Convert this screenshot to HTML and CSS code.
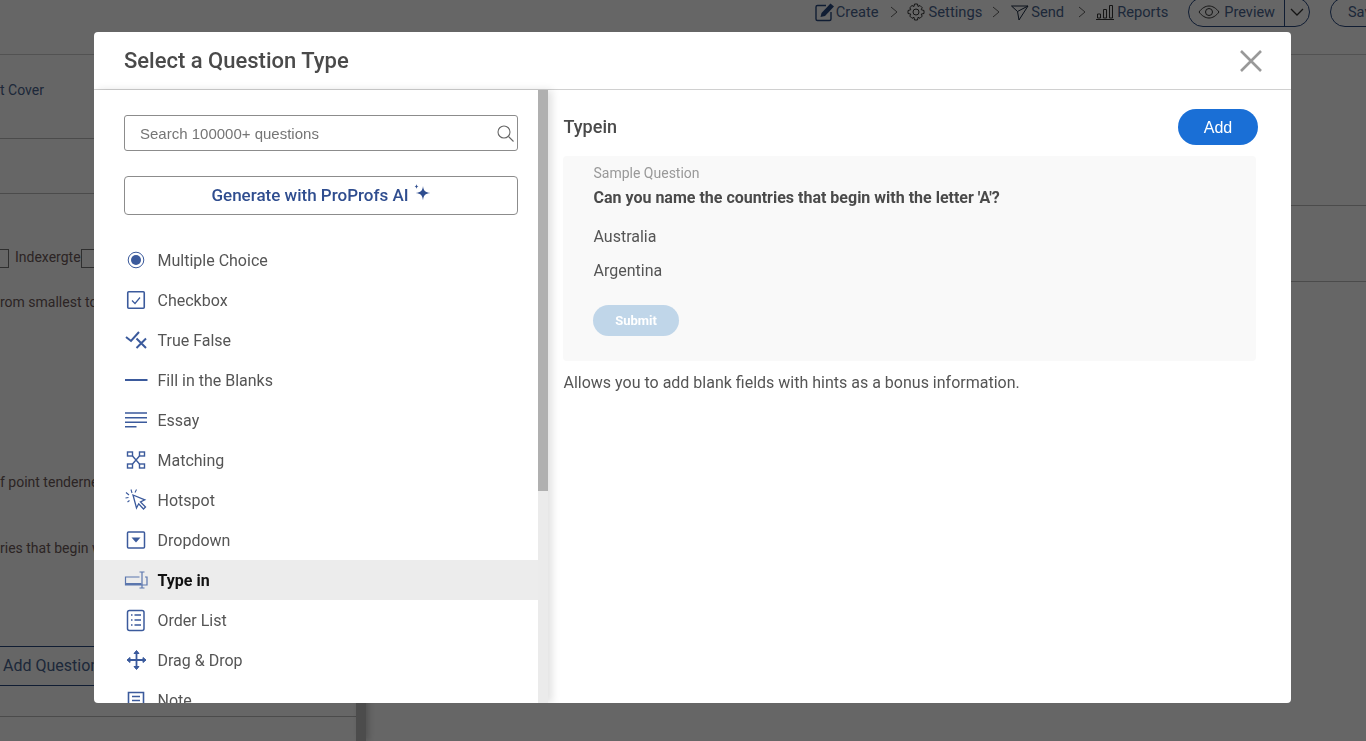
FILE: index.html
```html
<!DOCTYPE html>
<html lang="en">
<head>
  <meta charset="UTF-8" />
  <title>Select a Question Type</title>
  <link rel="stylesheet" href="styles.css">
</head>
<body>
  <div class="page">
    <header class="topbar">
      <nav class="steps">
        <a class="step step-create">
          <svg width="20" height="20" viewBox="0 0 20 20"><path d="M11 3.500H2.500A1.500 1.500 0 0 0 1 5v12a1.500 1.500 0 0 0 1.500 1.500h12A1.500 1.500 0 0 0 16 17V10" fill="none" stroke="#2a4a80" stroke-width="1.400"/><path d="M5.500 15l1-4L15.500 1.500l3.500 3-9 9.500z" fill="#2a4a80"/></svg>
          Create
        </a>
        <svg class="chev chev-create" width="8" height="12" viewBox="0 0 8 12" fill="none" stroke="#666" stroke-width="1"><path d="M1 1l6 5-6 5"/></svg>
        <a class="step step-settings">
          <svg width="18" height="18" viewBox="0 0 18 18" fill="none" stroke="#333" stroke-width="1"><circle cx="9" cy="9" r="3"/><path d="M7.500 1h3l.5 2.500 2-1 2.200 2.200-1 2 2.800.8v3l-2.800.6 1 2-2.200 2.200-2-1-.5 2.700h-3l-.5-2.700-2 1-2.200-2.200 1-2L1 10.500v-3l2.800-.8-1-2L5 2.500l2 1z"/></svg>
          Settings
        </a>
        <svg class="chev chev-settings" width="8" height="12" viewBox="0 0 8 12" fill="none" stroke="#666" stroke-width="1"><path d="M1 1l6 5-6 5"/></svg>
        <a class="step step-send">
          <svg width="18" height="18" viewBox="0 0 18 18" fill="none" stroke="#1c2c44" stroke-width="1"><path d="M.5 3h16.500L8 17 6.500 8.500zM6.500 8.500L17 3"/></svg>
          Send
        </a>
        <svg class="chev chev-send" width="8" height="12" viewBox="0 0 8 12" fill="none" stroke="#666" stroke-width="1"><path d="M1 1l6 5-6 5"/></svg>
        <a class="step step-reports">
          <svg width="18" height="18" viewBox="0 0 18 18" fill="none" stroke="#333" stroke-width="1"><path d="M0 16.500h18M1.500 11h3v4h-3zM7.500 6.500h3V15h-3zM13.500 2.500h3V15h-3z"/></svg>
          Reports
        </a>
      </nav>
      <div class="preview">
        <span class="preview-main">
          <svg width="22" height="14" viewBox="0 0 22 14" fill="none" stroke="#333" stroke-width="1"><path d="M1 7c3-4 6.500-6 10-6s7 2 10 6c-3 4-6.500 6-10 6S4 11 1 7z"/><circle cx="11" cy="7" r="3.500"/></svg>
          Preview
        </span>
        <span class="preview-arrow">
          <svg width="14" height="8" viewBox="0 0 14 8" fill="none" stroke="#333" stroke-width="1.300"><path d="M1 1l6 6 6-6"/></svg>
        </span>
      </div>
      <div class="save">Save</div>
    </header>

    <div class="editor">
      <section class="questions">
        <div class="row row-cover">t Cover</div>
        <div class="row row-empty"></div>
        <div class="row-blanks"><span class="blank blank-a"></span><span class="blank-word">Indexergte</span><span class="blank"></span></div>
        <div class="row-text row-smallest">rom smallest to largest</div>
        <div class="row-text row-tender">f point tenderness</div>
        <div class="row-text row-countries">ries that begin with</div>
        <div class="add-question">Add Question</div>
        <div class="row row-last"></div>
      </section>
      <div class="page-scroll"></div>
      <section class="settings-panel">
        <div class="row panel-top"></div>
        <div class="row panel-next"></div>
      </section>
    </div>
  </div>

  <div class="overlay">
    <div class="modal">
      <div class="modal-head">
        <h2>Select a Question Type</h2>
        <svg class="close" width="24" height="24" viewBox="0 0 24 24" fill="none" stroke="#999" stroke-width="2.600"><path d="M2 2l20 20M22 2L2 22"/></svg>
      </div>
      <div class="modal-body">
        <aside class="types">
          <div class="types-scroll">
            <div class="search">
              <span>Search 100000+ questions</span>
              <svg width="17" height="17" viewBox="0 0 17 17" fill="none" stroke="#666" stroke-width="1.100"><circle cx="7" cy="7" r="6"/><path d="M11.500 11.500l5 5"/></svg>
            </div>
            <button class="generate"><span>Generate with ProProfs AI</span>
              <svg width="18" height="18" viewBox="0 0 18 18" fill="#2f4d8f"><path d="M10 2c.6 4.800 2 6.300 7.500 7-5.500.7-6.900 2.200-7.500 7.500C9.400 11.200 8 9.700 2.500 9 8 8.300 9.400 6.800 10 2z"/><path d="M3.500 0c.2 1.700.7 2.300 2 2.500-1.300.2-1.800.8-2 2.500-.2-1.700-.7-2.300-2-2.500 1.300-.2 1.800-.8 2-2.500z"/></svg>
            </button>
            <ul class="type-list">
              <li>
                <svg width="24" height="24" viewBox="0 0 24 24" fill="none"><circle cx="12" cy="12" r="7.800" stroke="#3b5a9c" stroke-width="1"/><circle cx="12" cy="12" r="5" fill="#3b5a9c"/></svg>
                Multiple Choice
              </li>
              <li>
                <svg width="24" height="24" viewBox="0 0 24 24" fill="none" stroke="#3b5a9c"><rect x="3.750" y="3.750" width="16.500" height="16.500" rx="1" stroke-width="1.600"/><path d="M8 12.500l3 3 5-6" stroke-width="1.200"/></svg>
                Checkbox
              </li>
              <li>
                <svg width="24" height="24" viewBox="0 0 24 24" fill="none" stroke="#3b5a9c" stroke-width="2"><path d="M2 9l5 4 8-9"/><path d="M12.500 10.500l9.500 9.500M22 10.500L12.500 20"/></svg>
                True False
              </li>
              <li>
                <svg width="24" height="24" viewBox="0 0 24 24" fill="none" stroke="#3b5a9c" stroke-width="2"><path d="M1 12h22.500"/></svg>
                Fill in the Blanks
              </li>
              <li>
                <svg width="24" height="24" viewBox="0 0 24 24" fill="none" stroke="#3b5a9c" stroke-width="1.600"><path d="M1 5h22M1 9.700h22M1 14.300h22M1 18.800h11.500"/></svg>
                Essay
              </li>
              <li>
                <svg width="24" height="24" viewBox="0 0 24 24" fill="none" stroke="#3b5a9c" stroke-width="1.400"><rect x="3.500" y="4" width="5" height="4"/><rect x="15.500" y="4" width="5" height="4"/><rect x="3.500" y="16" width="5" height="4"/><rect x="15.500" y="16" width="5" height="4"/><path d="M8.500 8l7 8M15.500 8l-7 8"/></svg>
                Matching
              </li>
              <li>
                <svg width="24" height="24" viewBox="0 0 24 24" fill="none" stroke="#3b5a9c" stroke-width="1.300"><path d="M9 7l3.500 13 2.200-4.200 4.800 5.200 2-2-5-5 4.300-2.200z"/><path d="M7 1.500l1 3.500M2 4.500l3 2.500M1.500 10l3-.5M12.500 1.500l-1.500 3M3.500 14l2-1.500" stroke-width="1.100"/></svg>
                Hotspot
              </li>
              <li>
                <svg width="24" height="24" viewBox="0 0 24 24" fill="none"><rect x="3.500" y="4" width="17" height="16" rx="1" stroke="#3b5a9c" stroke-width="1.500"/><path d="M7.500 9.500h9l-4.500 5z" fill="#3b5a9c"/></svg>
                Dropdown
              </li>
              <li class="active">
                <svg width="24" height="24" viewBox="0 0 24 24" fill="none" stroke="#5b76ad" stroke-width="1.200"><path d="M15.500 9H1.500v8H23V9h-2"/><path d="M15.500 4h5M18 4v16M15.500 20h5"/><path d="M1.500 16h16" stroke-width="2"/></svg>
                Type in
              </li>
              <li>
                <svg width="24" height="24" viewBox="0 0 24 24" fill="none" stroke="#3b5a9c" stroke-width="1.500"><rect x="3.500" y="2.500" width="16.500" height="20" rx="2"/><path d="M7 7h1.500M10.500 7H17M7 12h1.500M10.500 12H17M7 17h1.500M10.500 17H17" stroke-width="1.400"/></svg>
                Order List
              </li>
              <li>
                <svg width="24" height="24" viewBox="0 0 24 24" fill="none" stroke="#3b5a9c" stroke-width="1.800"><path d="M12.500 4v16M4.500 12h16"/><path d="M10 5.500l2.500-3 2.500 3zM10 18.500l2.500 3 2.500-3zM6 9.500l-3 2.500 3 2.500zM19 9.500l3 2.500-3 2.500z" fill="#3b5a9c" stroke-width="1"/></svg>
                Drag &amp; Drop
              </li>
              <li>
                <svg width="24" height="24" viewBox="0 0 24 24" fill="none" stroke="#3b5a9c" stroke-width="1.600"><path d="M4.500 4.500h15v14l-4 4h-11z"/><path d="M8 8.500h8M8 12.500h8M8 16.500h4"/></svg>
                Note
              </li>
            </ul>
          </div>
          <div class="scrollbar"><div class="thumb"></div></div>
        </aside>
        <main class="detail">
          <div class="detail-head">
            <h3>Typein</h3>
            <button class="add">Add</button>
          </div>
          <div class="sample">
            <div class="sample-label">Sample Question</div>
            <div class="sample-q">Can you name the countries that begin with the letter 'A'?</div>
            <div class="sample-a">Australia</div>
            <div class="sample-a">Argentina</div>
            <button class="submit">Submit</button>
          </div>
          <p class="hint">Allows you to add blank fields with hints as a bonus information.</p>
        </main>
      </div>
    </div>
  </div>
</body>
</html>
```

FILE: styles.css
```css
* {
  margin: 0;
  padding: 0;
  box-sizing: border-box;
  font-family: 'Roboto', sans-serif;
}

html, body {
  height: 100%;
  overflow: hidden;
}

body {
  background: #fff;
  color: #333;
}

button {
  border: none;
  background: none;
  cursor: pointer;
}

/* page behind the modal */
.page {
  height: 741px;
  display: flex;
  flex-direction: column;
}

.topbar {
  height: 55px;
  flex: none;
  border-bottom: 1px solid #ccc;
  display: flex;
  justify-content: flex-end;
  align-items: flex-start;
  margin-right: -44px;
}

.steps {
  display: flex;
  align-items: center;
  height: 24px;
  color: #4a6590;
  font-size: 14.7px;
}

.step {
  display: flex;
  align-items: center;
}

.step-create { gap: 1px; }
.step-settings { gap: 4px; }
.step-send { gap: 2px; }
.step-reports { gap: 3px; }

.chev-create { margin: 0 9px 0 11px; }
.chev-settings { margin: 0 11px 0 10px; }
.chev-send { margin: 0 10px 0 14px; }

.preview {
  display: flex;
  height: 30px;
  margin: -3px 0 0 20px;
  border: 1px solid #2a4a80;
  border-radius: 15px;
  color: #4a6590;
  font-size: 14.5px;
}

.preview-main {
  display: flex;
  align-items: center;
  gap: 4px;
  padding: 0 9px 0 9px;
  border-right: 1px solid #2a4a80;
}

.preview-arrow {
  display: flex;
  align-items: center;
  padding: 0 5px;
}

.save {
  width: 80px;
  height: 30px;
  margin: -3px 0 0 20px;
  padding: 6px 0 0 17px;
  border: 1px solid #2a4a80;
  border-radius: 15px;
  color: #4a6590;
  font-size: 14.5px;
}

.editor {
  flex: 1;
  display: flex;
}

.questions {
  width: 356px;
  font-size: 14px;
  color: #6e5a5a;
}

.row {
  border-bottom: 1px solid #bbb;
}

.row-cover {
  height: 84px;
  padding-top: 27px;
  color: #4a6590;
}

.row-empty {
  height: 55px;
}

.row-blanks {
  display: flex;
  align-items: center;
  height: 20px;
  margin-top: 54px;
}

.blank {
  width: 20px;
  height: 19px;
  border: 1px solid #777;
}

.blank-a {
  width: 9px;
  margin-right: 6px;
  border-left: none;
}

.blank-word {
  padding-bottom: 2px;
}

.row-text {
  height: 20px;
}

.row-smallest {
  margin-top: 26px;
}

.row-tender {
  margin-top: 160px;
}

.row-countries {
  margin-top: 46px;
}

.add-question {
  margin-top: 86px;
  height: 40px;
  padding: 9px 0 0 3px;
  border-top: 1px solid #2a4a80;
  border-bottom: 1px solid #2a4a80;
  color: #4a6590;
  font-size: 16px;
}

.row-last {
  height: 31px;
}

.page-scroll {
  width: 10px;
  background: #bebebe;
  box-shadow: 3px 0 6px rgba(0, 0, 0, 0.2);
}

.settings-panel {
  flex: 1;
}

.panel-top {
  height: 151px;
}

.panel-next {
  height: 76px;
}

/* modal */
.overlay {
  position: fixed;
  inset: 0;
  background: rgba(0, 0, 0, 0.6);
  padding: 32px 75px 38px 94px;
}

.modal {
  background: #fff;
  height: 671px;
  border-radius: 4px;
  display: flex;
  flex-direction: column;
  overflow: hidden;
}

.modal-head {
  height: 58px;
  flex: none;
  border-bottom: 1px solid #d0d0d0;
  padding: 0 28px 0 30px;
  display: flex;
  align-items: center;
  justify-content: space-between;
}

.modal-head h2 {
  font-size: 22px;
  font-weight: 500;
  color: #4a4a4a;
}

.modal-body {
  flex: 1;
  min-height: 0;
  display: flex;
}

.types {
  width: 454px;
  flex: none;
  display: flex;
  box-shadow: 4px 0 8px rgba(0, 0, 0, 0.12);
}

.types-scroll {
  width: 444px;
  overflow: hidden;
  padding-top: 25px;
}

.search {
  margin: 0 20px 0 30px;
  height: 36px;
  border: 1px solid #8c8c8c;
  border-radius: 3px;
  display: flex;
  align-items: center;
  justify-content: space-between;
  padding: 0 3px 0 15px;
}

.search span {
  color: #757575;
  font-size: 15px;
  font-family: 'Liberation Sans', sans-serif;
}

.generate {
  width: 394px;
  height: 39px;
  margin: 25px 0 0 30px;
  border: 1px solid #8c8c8c;
  border-radius: 4px;
  display: flex;
  align-items: center;
  justify-content: center;
  gap: 4px;
  color: #2f4d8f;
  font-size: 17px;
  font-weight: 500;
}

.generate span {
  padding-bottom: 2px;
}

.generate svg {
  margin-top: -5px;
}

.type-list {
  list-style: none;
  margin-top: 25px;
}

.type-list li {
  height: 40px;
  display: flex;
  align-items: center;
  gap: 9.5px;
  padding-left: 30px;
  font-size: 16px;
  color: #555;
}

.type-list li.active {
  background: #ececec;
  color: #111;
  font-weight: 700;
}

.scrollbar {
  width: 10px;
  background: #ebebeb;
}

.thumb {
  height: 401px;
  background: #b0b0b0;
}

.detail {
  flex: 1;
  padding: 19px 33px 0 15.5px;
}

.detail-head {
  display: flex;
  align-items: center;
  justify-content: space-between;
  height: 36px;
}

.detail-head h3 {
  font-size: 18px;
  font-weight: 500;
  color: #4a4a4a;
  padding-bottom: 2px;
}

.add {
  width: 80px;
  height: 36px;
  padding-top: 1px;
  border-radius: 18px;
  background: #1a6fd6;
  color: #fff;
  font-size: 16px;
  font-family: 'Liberation Sans', sans-serif;
}

.sample {
  margin: 11px 2px 0 -0.5px;
  height: 205px;
  background: #f9f9f9;
  padding: 8px 30px 0 30.5px;
  border-radius: 4px;
}

.sample-label {
  font-size: 14px;
  line-height: 18px;
  color: #999;
}

.sample-q {
  margin-top: 6px;
  font-size: 16px;
  line-height: 19px;
  font-weight: 700;
  color: #4a4a4a;
}

.sample-a {
  margin-top: 15px;
  font-size: 16px;
  line-height: 19px;
  color: #555;
}

.sample-q + .sample-a {
  margin-top: 20px;
}

.submit {
  display: block;
  width: 86px;
  height: 31px;
  margin: 25px 0 0 -0.5px;
  border-radius: 16px;
  background: #c0d6e9;
  color: #fff;
  font-size: 13px;
  font-weight: 700;
}

.hint {
  margin-top: 12px;
  font-size: 16px;
  line-height: 19px;
  color: #555;
}
```
